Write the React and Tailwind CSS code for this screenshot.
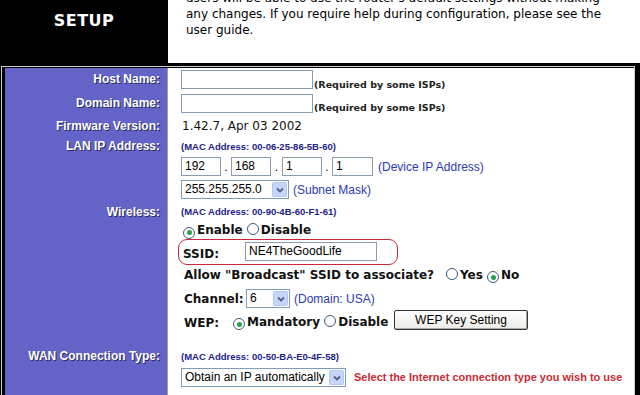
import React from 'react';

const dv = "font-['DejaVu_Sans',sans-serif]";
const ar = "font-['Liberation_Sans',Arial,sans-serif]";

function Label({ children, pt = 'pt-[3px]' }) {
    return (
        <div className={`w-[163px] shrink-0 bg-[#6464c8] border-r border-[#9a9ab0] text-right pr-[7px] ${pt} ${ar} font-bold text-[12px] leading-[14px] text-white [text-shadow:1px_1px_0_#2a2a55]`}>
            {children}
        </div>
    );
}

function TextBox({ value = '', className = '' }) {
    return (
        <div className={`h-[19px] bg-white border border-[#8a9cb0] px-[3px] ${ar} text-[12px] leading-[17px] text-black ${className}`}>
            {value}
        </div>
    );
}

function Select({ value, className = '' }) {
    return (
        <div className={`h-[19px] bg-white border border-[#7f9db9] flex items-stretch ${className}`}>
            <div className={`flex-1 px-[3px] ${ar} text-[12px] leading-[17px] text-black whitespace-nowrap overflow-hidden`}>{value}</div>
            <div className="w-[15px] m-[1px] bg-[#c6d6fb] border border-[#b5c8f2] rounded-[2px] flex items-center justify-center">
                <svg width="8" height="6" viewBox="0 0 8 6">
                    <path d="M1 1.5 L4 4.5 L7 1.5" stroke="#4d6185" strokeWidth="1.8" fill="none" />
                </svg>
            </div>
        </div>
    );
}

function Radio({ on }) {
    return (
        <span className="inline-flex w-[12px] h-[12px] rounded-full border border-[#3a5b7a] bg-white items-center justify-center mr-[2px] align-[-1px]">
            {on && <span className="w-[5px] h-[5px] rounded-full bg-[#22a04a]" />}
        </span>
    );
}

function Mac({ children, className = '' }) {
    return (
        <div className={`${ar} font-bold text-[9.5px] leading-[12px] text-[#22228a] ${className}`}>(MAC Address: {children})</div>
    );
}

const bold = `${dv} font-bold text-[12px] leading-[14px] text-[#111]`;
const blue = `${ar} text-[12px] leading-[14px] text-[#2a3ab0]`;

export default function App() {
    return (
        <div className="w-[640px] h-[395px] overflow-hidden bg-white">
            {/* Header */}
            <div className="flex h-[63px]">
                <div className="w-[168px] bg-black pt-[8px] text-center">
                    <span className={`${dv} font-bold text-[16px] leading-[20px] text-white tracking-[0.5px]`}>SETUP</span>
                </div>
                <div className={`flex-1 bg-white pl-[18px] -mt-[10px] ${dv} text-[12px] leading-[16px] text-black`}>
                    <div>users will be able to use the router's default settings without making</div>
                    <div>any changes. If you require help during configuration, please see the</div>
                    <div>user guide.</div>
                </div>
            </div>
            <div className="h-[3px] bg-black" />

            {/* Frame */}
            <div className="bg-black pl-[1px] pr-[5px] h-[329px]">
                <div className="bg-[#d0d0d0] pl-[1px] pt-[1px] pr-[1px] h-full">
                    <div className="bg-black pl-[3px] pt-[1px] h-full">
                        <div className="flex flex-col h-full bg-white">
                            {/* Host Name */}
                            <div className="flex h-[25px]">
                                <Label pt="pt-[4px]">Host Name:</Label>
                                <div className="flex-1 pl-[13px] pt-[2px] flex items-end pb-[2px]">
                                    <TextBox className="w-[132px] self-start" />
                                    <span className={`${dv} font-bold text-[9.5px] leading-[12px] text-[#222] ml-[1px]`}>(Required by some ISPs)</span>
                                </div>
                            </div>
                            {/* Domain Name */}
                            <div className="flex h-[23px]">
                                <Label>Domain Name:</Label>
                                <div className="flex-1 pl-[13px] pt-[1px] flex items-end pb-[2px]">
                                    <TextBox className="w-[132px] self-start" />
                                    <span className={`${dv} font-bold text-[9.5px] leading-[12px] text-[#222] ml-[1px]`}>(Required by some ISPs)</span>
                                </div>
                            </div>
                            {/* Firmware */}
                            <div className="flex h-[20px]">
                                <Label>Firmware Version:</Label>
                                <div className={`flex-1 pl-[14px] pt-[3px] ${dv} text-[12px] leading-[14px] text-[#111]`}>1.42.7, Apr 03 2002</div>
                            </div>
                            {/* LAN IP */}
                            <div className="flex h-[66px]">
                                <Label>LAN IP Address:</Label>
                                <div className="flex-1 pl-[13px]">
                                    <Mac className="mt-[5px]">00-06-25-86-5B-60</Mac>
                                    <div className="flex items-center mt-[4px]">
                                        <TextBox value="192" className="w-[40px]" />
                                        <span className={`w-[10px] text-center ${ar} text-[12px]`}>.</span>
                                        <TextBox value="168" className="w-[40px]" />
                                        <span className={`w-[11px] text-center ${ar} text-[12px]`}>.</span>
                                        <TextBox value="1" className="w-[40px]" />
                                        <span className={`w-[10px] text-center ${ar} text-[12px]`}>.</span>
                                        <TextBox value="1" className="w-[41px]" />
                                        <span className={`${blue} ml-[5px]`}>(Device IP Address)</span>
                                    </div>
                                    <div className="flex items-center mt-[4px]">
                                        <Select value="255.255.255.0" className="w-[108px]" />
                                        <span className={`${blue} ml-[4px]`}>(Subnet Mask)</span>
                                    </div>
                                </div>
                            </div>
                            {/* Wireless */}
                            <div className="flex h-[143px]">
                                <Label>Wireless:</Label>
                                <div className="flex-1 pl-[13px]">
                                    <Mac className="mt-[4px]">00-90-4B-60-F1-61</Mac>
                                    <div className={`${bold} mt-[5px] pl-[2px]`}>
                                        <Radio on />Enable <Radio />Disable
                                    </div>
                                    <div className="w-[220px] h-[26px] -ml-[3px] border-[1.5px] border-[#c8283a] rounded-[9px] flex items-center">
                                        <span className={`${bold} pl-[4px] w-[66px] pt-[4px]`}>SSID:</span>
                                        <TextBox value="NE4TheGoodLife" className="w-[132px] h-[18px] leading-[16px]" />
                                    </div>
                                    <div className={`${bold} mt-[3px] pl-[3px] flex`}>
                                        <span className="w-[262px]">Allow "Broadcast" SSID to associate?</span>
                                        <span><Radio />Yes <Radio on />No</span>
                                    </div>
                                    <div className="flex items-center mt-[6px] pl-[3px]">
                                        <span className={`${bold} w-[62px]`}>Channel:</span>
                                        <Select value="6" className="w-[44px] h-[18px]" />
                                        <span className={`${blue} ml-[4px]`}>(Domain: USA)</span>
                                    </div>
                                    <div className="flex items-end mt-[2px] pl-[3px]">
                                        <span className={`${bold} w-[49px]`}>WEP:</span>
                                        <span className={`${bold} w-[161px]`}><Radio on />Mandatory <Radio />Disable</span>
                                        <div className={`w-[134px] h-[20px] border border-[#333] bg-gradient-to-b from-white to-[#ecebe6] rounded-[2px] shadow-[inset_-1px_-1px_0_#aaa] text-center ${ar} text-[12px] leading-[18px] text-black`}>
                                            WEP Key Setting
                                        </div>
                                    </div>
                                </div>
                            </div>
                            {/* WAN */}
                            <div className="flex flex-1">
                                <Label pt="pt-[4px]">WAN Connection Type:</Label>
                                <div className="flex-1 pl-[13px]">
                                    <Mac className="mt-[6px]">00-50-BA-E0-4F-58</Mac>
                                    <div className="flex items-center mt-[5px]">
                                        <Select value="Obtain an IP automatically" className="w-[165px]" />
                                        <span className={`${ar} font-bold text-[11px] text-[#cc2a35] ml-[8px] whitespace-nowrap`}>Select the Internet connection type you wish to use</span>
                                    </div>
                                </div>
                            </div>
                        </div>
                    </div>
                </div>
            </div>
        </div>
    );
}
